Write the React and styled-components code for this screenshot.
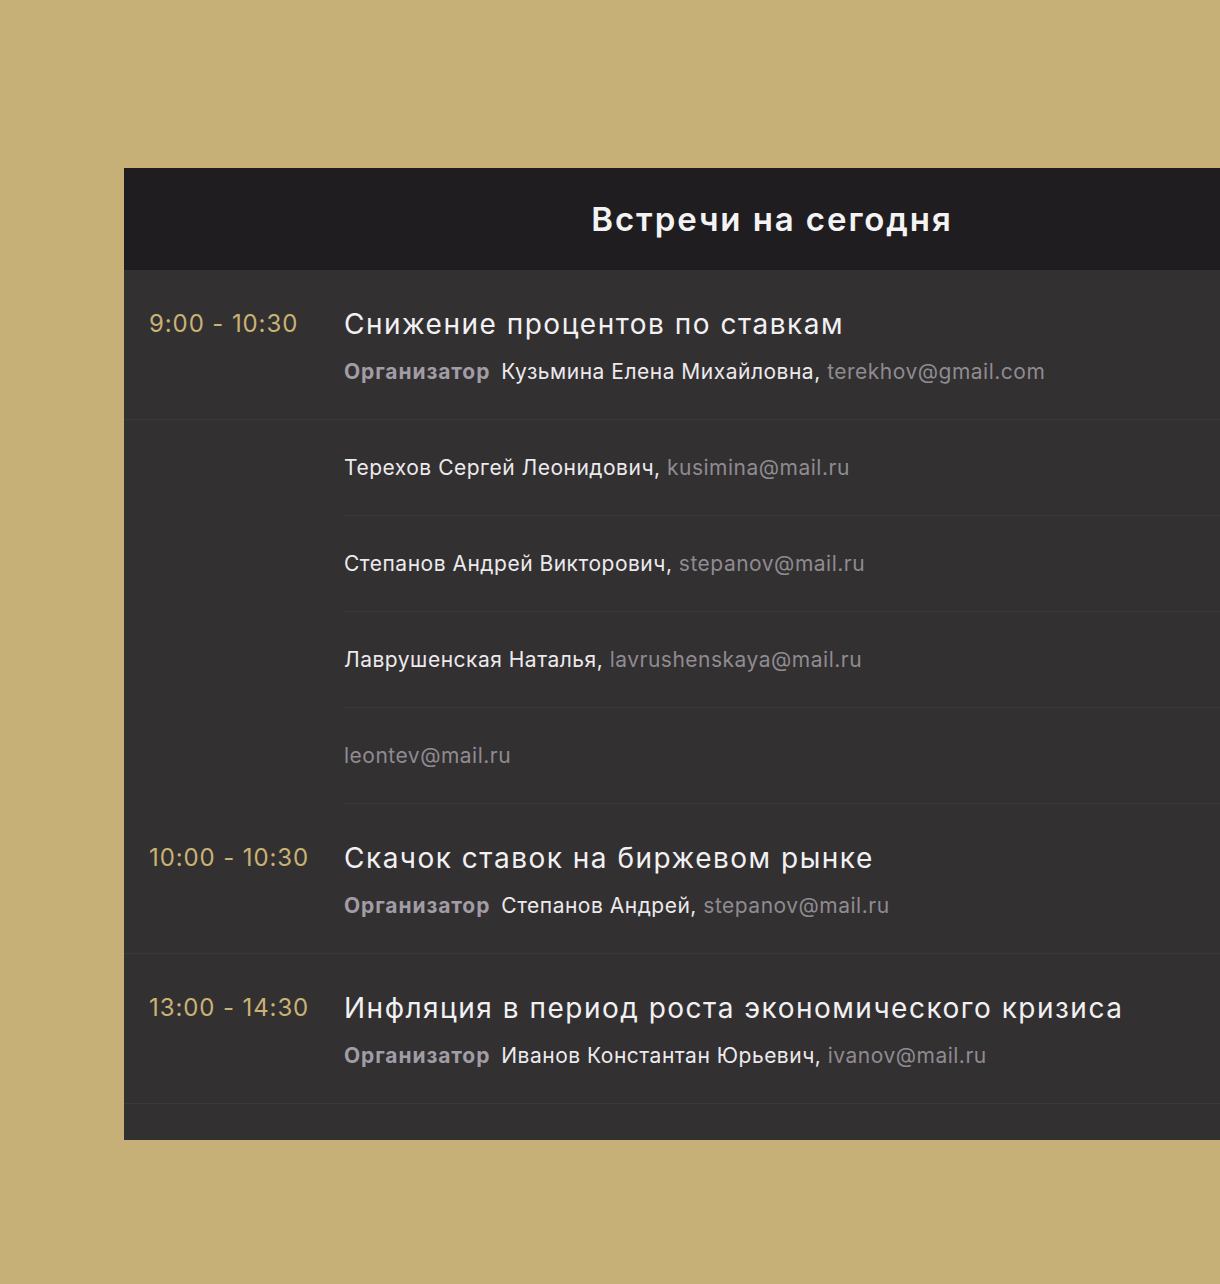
import React from 'react';
import styled, { createGlobalStyle } from 'styled-components';

const GlobalStyle = createGlobalStyle`
  html, body {
    margin: 0;
    padding: 0;
    background: #c6b077;
    overflow-x: hidden;
  }
  body {
    font-family: Inter, "Noto Sans", sans-serif;
    -webkit-font-smoothing: antialiased;
  }
`;

const Page = styled.div`
  width: 1220px;
  height: 1284px;
  padding-top: 168px;
  box-sizing: border-box;
  overflow: hidden;
`;

const Panel = styled.section`
  margin-left: 124px;
  width: 1296px;
  background: #333032;
  padding-bottom: 36px;
`;

const Header = styled.header`
  height: 102px;
  background: #1f1d20;
  display: flex;
  align-items: center;
  justify-content: center;
`;

const Title = styled.h1`
  margin: 0;
  color: #f4f3f4;
  font-size: 33px;
  font-weight: 600;
  letter-spacing: 1.9px;
`;

const Meeting = styled.div`
  display: flex;
  padding: 36px 0 35px;
  border-bottom: 1px solid #3b383a;
`;

const Time = styled.div`
  width: 195px;
  padding-left: 25px;
  color: #c9b274;
  font-size: 24px;
  line-height: 36px;
  letter-spacing: 0.9px;
  flex-shrink: 0;
`;

const Info = styled.div`
  display: flex;
  flex-direction: column;
  gap: 18px;
`;

const Subject = styled.div`
  color: #f2f1f2;
  font-size: 28px;
  line-height: 36px;
  letter-spacing: 1.5px;
`;

const Line = styled.div`
  font-size: 21px;
  line-height: 24px;
  letter-spacing: 0.5px;
  color: #eceaec;
`;

const Label = styled.span`
  color: #a19ca5;
  font-weight: 700;
  letter-spacing: 0.9px;
  margin-right: 11px;
`;

const Email = styled.span`
  color: #8f8b90;
`;

const Participants = styled.div`
  padding-left: 220px;
`;

const Participant = styled.div`
  height: 95px;
  display: flex;
  align-items: center;
  border-bottom: 1px solid #3b383a;
  font-size: 21px;
  letter-spacing: 0.5px;
  color: #eceaec;
`;

const meetings = [
  {
    time: '9:00 - 10:30',
    subject: 'Снижение процентов по ставкам',
    organizer: 'Кузьмина Елена Михайловна',
    email: 'terekhov@gmail.com',
    participants: [
      { name: 'Терехов Сергей Леонидович', email: 'kusimina@mail.ru' },
      { name: 'Степанов Андрей Викторович', email: 'stepanov@mail.ru' },
      { name: 'Лаврушенская Наталья', email: 'lavrushenskaya@mail.ru' },
      { name: '', email: 'leontev@mail.ru' },
    ],
  },
  {
    time: '10:00 - 10:30',
    subject: 'Скачок ставок на биржевом рынке',
    organizer: 'Степанов Андрей',
    email: 'stepanov@mail.ru',
    participants: [],
  },
  {
    time: '13:00 - 14:30',
    subject: 'Инфляция в период роста экономического кризиса',
    organizer: 'Иванов Константан Юрьевич',
    email: 'ivanov@mail.ru',
    participants: [],
  },
];

const App = () => (
  <Page>
    <GlobalStyle />
    <Panel>
      <Header>
        <Title>Встречи на сегодня</Title>
      </Header>
      {meetings.map((m) => (
        <React.Fragment key={m.time}>
          <Meeting>
            <Time>{m.time}</Time>
            <Info>
              <Subject>{m.subject}</Subject>
              <Line>
                <Label>Организатор</Label>
                {m.organizer}, <Email>{m.email}</Email>
              </Line>
            </Info>
          </Meeting>
          {m.participants.length > 0 && (
            <Participants>
              {m.participants.map((p) => (
                <Participant key={p.email}>
                  {p.name && <>{p.name},&nbsp;</>}
                  <Email>{p.email}</Email>
                </Participant>
              ))}
            </Participants>
          )}
        </React.Fragment>
      ))}
    </Panel>
  </Page>
);

export default App;
